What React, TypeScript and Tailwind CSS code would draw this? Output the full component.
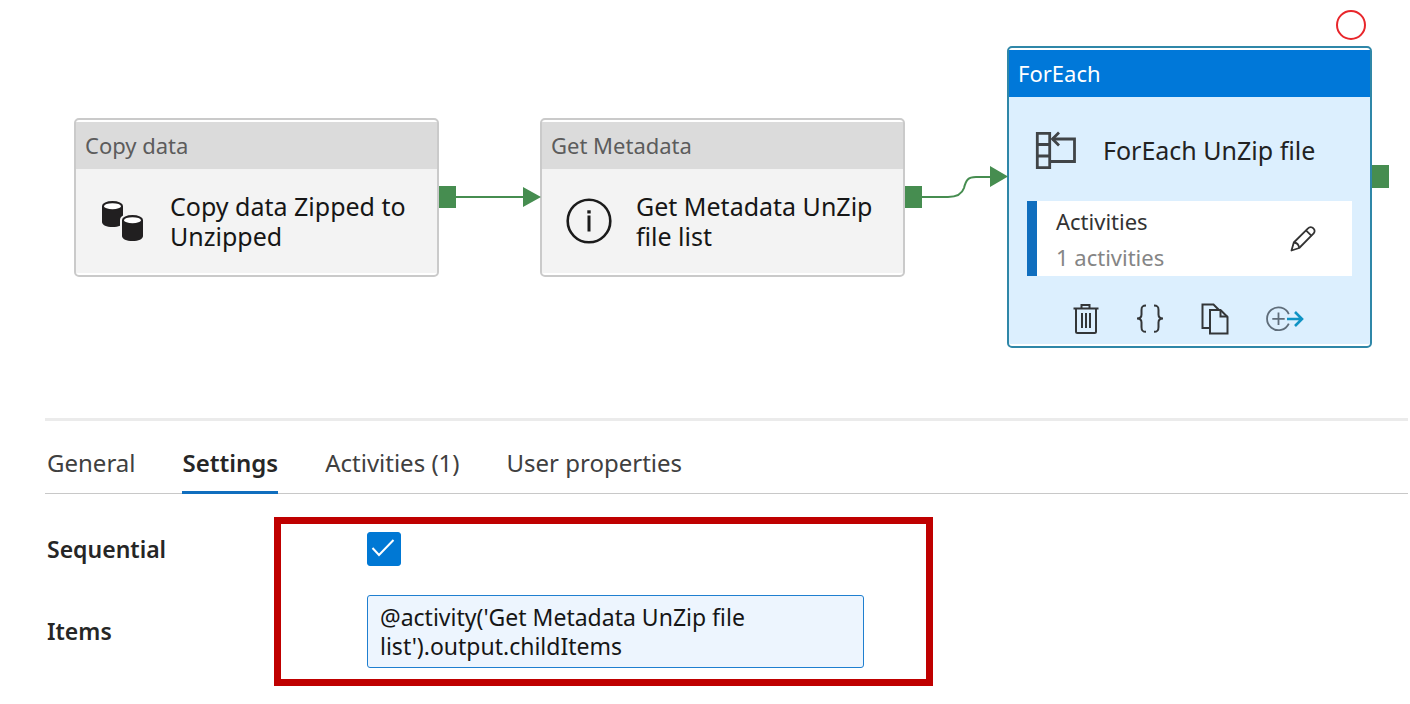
import { useState, type ReactNode } from "react";

type ActivityNodeProps = {
  type: string;
  name: string;
  icon: ReactNode;
  place: string;
};

function ActivityNode({ type, name, icon, place }: ActivityNodeProps) {
  return (
    <article
      className={`absolute w-[365px] rounded-[5px] border-2 border-[#cacaca] bg-white py-0.5 ${place}`}
    >
      <h2 className="flex h-[47px] items-center bg-[#dbdbdb] px-[9px] text-[22px] text-[#5c5c5c]">
        {type}
      </h2>
      <div className="flex h-[104px] items-center bg-[#f3f3f3] pl-6">
        <div className="flex w-[70px] shrink-0">{icon}</div>
        <p className="w-[250px] text-[25px] leading-[30px] text-[#161616]">{name}</p>
      </div>
    </article>
  );
}

function CopyDataIcon() {
  return (
    <svg width="44" height="42" viewBox="0 0 44 42" aria-hidden="true">
      <path d="M2 6v16c0 3 4.500 5 10.500 5s10.500-2 10.500-5V6z" fill="#211f20" />
      <ellipse cx="12.500" cy="6" rx="10.500" ry="5" fill="#211f20" />
      <ellipse cx="12.500" cy="6.200" rx="8.400" ry="3" fill="#fff" />
      <path d="M20 20v17h24V20c0-4-5-6.500-12-6.500S20 16 20 20z" fill="#f3f3f3" />
      <path d="M22 20v16c0 3 4.500 5 10.500 5s10.500-2 10.500-5V20z" fill="#211f20" />
      <ellipse cx="32.500" cy="20" rx="10.500" ry="5" fill="#211f20" />
      <ellipse cx="32.500" cy="20.200" rx="8.400" ry="3" fill="#fff" />
    </svg>
  );
}

function InfoIcon() {
  return (
    <svg width="46" height="46" viewBox="0 0 46 46" fill="none" aria-hidden="true">
      <circle cx="23" cy="23" r="21.300" stroke="#1b1b1b" strokeWidth="2.600" />
      <rect x="21.500" y="17.500" width="3" height="16" fill="#1b1b1b" />
      <rect x="21.300" y="12.300" width="3.400" height="3.200" fill="#1b1b1b" />
    </svg>
  );
}

function ForEachIcon() {
  return (
    <svg
      width="42"
      height="40"
      viewBox="0 0 42 40"
      fill="none"
      stroke="#404447"
      strokeWidth="2.800"
      aria-hidden="true"
    >
      <path d="M2.300 3.300h12.400v34.400H2.300zM2.300 14.500h12.400M2.300 26h12.400" />
      <path d="M17 9h22.500v22.500H15" />
      <path d="M24 2.500L17.500 9l6.500 6.500" />
    </svg>
  );
}

function PencilIcon() {
  return (
    <svg
      width="26"
      height="26"
      viewBox="0 0 26 26"
      fill="none"
      stroke="#333"
      strokeWidth="1.800"
      strokeLinejoin="round"
      aria-hidden="true"
    >
      <path d="M1.500 24.500l2.300-8L18 2.300a3.600 3.600 0 0 1 5.400 0 3.600 3.600 0 0 1 0 5.400L9.200 22z" />
      <path d="M3.800 16.500c3 .2 5 2.200 5.400 5.500M16 4.300l5.600 5.600" />
    </svg>
  );
}

function TrashIcon() {
  return (
    <svg
      width="26"
      height="32"
      viewBox="0 0 26 32"
      fill="none"
      stroke="#333638"
      strokeWidth="2"
      aria-hidden="true"
    >
      <path d="M0.500 5.500h25M8.500 5V2h8v3M3 6v22.500a1.500 1.500 0 0 0 1.500 1.500h17a1.500 1.500 0 0 0 1.500-1.500V6" />
      <path d="M9 10v15M13 10v15M17 10v15" />
    </svg>
  );
}

function BracesIcon() {
  return (
    <svg
      width="28"
      height="30"
      viewBox="0 0 28 30"
      fill="none"
      stroke="#333638"
      strokeWidth="2"
      aria-hidden="true"
    >
      <path d="M10 1.500C6 1.500 5.500 3 5.500 6v4.500c0 2.500-1.500 4-4.500 4 3 0 4.500 1.500 4.500 4V23c0 3 .5 4.800 4.500 4.800" />
      <path d="M18 1.500c4 0 4.500 1.500 4.500 4.500v4.500c0 2.500 1.500 4 4.500 4-3 0-4.500 1.500-4.500 4V23c0 3-.5 4.800-4.500 4.800" />
    </svg>
  );
}

function CopyIcon() {
  return (
    <svg
      width="28"
      height="32"
      viewBox="0 0 28 32"
      fill="none"
      stroke="#333638"
      strokeWidth="2"
      aria-hidden="true"
    >
      <path d="M9 25H1.500V1.500h11L18 7" />
      <path d="M9 7v23.500h17.500V14L19.500 7z" />
      <path d="M19.500 7v6.500h7" />
    </svg>
  );
}

function AddOutputIcon() {
  return (
    <svg width="38" height="26" viewBox="0 0 38 26" fill="none" aria-hidden="true">
      <path
        d="M22.800 8A11.400 11.400 0 1 0 22.800 17.500"
        stroke="#5f6d7a"
        strokeWidth="1.800"
      />
      <path d="M12.500 6.500v12.500M6.300 12.800h12.400" stroke="#5f6d7a" strokeWidth="1.800" />
      <path d="M21 13h14.500M29 6l7 7-7 7" stroke="#0f93c4" strokeWidth="2.600" />
    </svg>
  );
}

function ForEachNode() {
  return (
    <article className="absolute left-[1007px] top-[46px] w-[365px] rounded-[5px] border-2 border-[#2f87a8] bg-white py-0.5">
      <h2 className="flex h-[47px] items-center bg-[#0078d9] px-[9px] text-[22px] text-white">
        ForEach
      </h2>
      <div className="h-[247px] bg-[#dceffe] pt-8">
        <div className="flex items-center pl-[26px]">
          <div className="w-[68px]">
            <ForEachIcon />
          </div>
          <p className="text-[25px] leading-[42px] text-[#222]">ForEach UnZip file</p>
        </div>
        <section className="mx-[18px] mt-[30px] flex h-[75px] items-center border-l-10 border-[#106ebe] bg-white pl-[19px] pr-9">
          <div className="flex-1 text-[22px] leading-9">
            <h3 className="text-[#333]">Activities</h3>
            <p className="text-[#858585]">1 activities</p>
          </div>
          <button type="button" aria-label="Edit activities">
            <PencilIcon />
          </button>
        </section>
        <div className="mt-[27px] flex items-center gap-[37px] pl-16">
          <button type="button" aria-label="Delete">
            <TrashIcon />
          </button>
          <button type="button" aria-label="Code">
            <BracesIcon />
          </button>
          <button type="button" aria-label="Clone">
            <CopyIcon />
          </button>
          <button type="button" aria-label="Add output">
            <AddOutputIcon />
          </button>
        </div>
      </div>
    </article>
  );
}

function PipelineCanvas() {
  return (
    <section aria-label="Pipeline" className="relative h-[418px] overflow-hidden">
      <ActivityNode
        type="Copy data"
        name="Copy data Zipped to Unzipped"
        icon={<CopyDataIcon />}
        place="left-[74px] top-[118px]"
      />
      <ActivityNode
        type="Get Metadata"
        name="Get Metadata UnZip file list"
        icon={<InfoIcon />}
        place="left-[540px] top-[118px]"
      />
      <ForEachNode />
      <svg
        className="pointer-events-none absolute left-0 top-0"
        width="1410"
        height="418"
        viewBox="0 0 1410 418"
        fill="none"
        aria-hidden="true"
      >
        <g fill="#468d50">
          <path d="M439 186h17v22h-17zM905 186h17v22h-17zM1372 165h17v23h-17z" />
          <path d="M523 187l18 10-18 10zM990 166l18 10.500-18 10.500z" />
        </g>
        <path
          d="M456 197h68M922 197h26c8 0 14-3 16-9 2-8 4-11 12-11h15"
          stroke="#468d50"
          strokeWidth="2"
        />
        <circle cx="1351" cy="25" r="14" stroke="#e8262b" strokeWidth="2" />
      </svg>
    </section>
  );
}

const tabs = ["General", "Settings", "Activities (1)", "User properties"];

export default function App() {
  const [active, setActive] = useState("Settings");
  const [sequential, setSequential] = useState(true);
  const [items, setItems] = useState(
    "@activity('Get Metadata UnZip file list').output.childItems",
  );

  return (
    <main className="min-h-screen bg-white font-['Noto_Sans','Open_Sans',sans-serif] text-[#262626]">
      <PipelineCanvas />
      <section aria-label="Properties" className="ml-[45px] mr-0.5 border-t-3 border-[#ebebeb]">
        <div role="tablist" className="flex h-[73px] gap-[47px] border-b border-[#c8c8c8] pl-0.5">
          {tabs.map((tab) => (
            <button
              key={tab}
              type="button"
              role="tab"
              aria-selected={tab === active}
              onClick={() => setActive(tab)}
              className={`-mb-px pt-3.5 border-b-3 text-[24px] ${
                tab === active
                  ? "border-[#106ebe] font-semibold text-[#262626]"
                  : "border-transparent text-[#404040]"
              }`}
            >
              {tab}
            </button>
          ))}
        </div>
        <form className="relative px-0.5 pt-[38px] text-[23px]">
          <div className="flex items-center">
            <label htmlFor="sequential" className="w-80 font-semibold">
              Sequential
            </label>
            <div className="grid">
              <input
                id="sequential"
                type="checkbox"
                checked={sequential}
                onChange={(event) => setSequential(event.target.checked)}
                className="peer col-start-1 row-start-1 size-[34px] appearance-none rounded-[3px] border border-[#0078d4] checked:bg-[#0078d4]"
              />
              <svg
                className="pointer-events-none invisible col-start-1 row-start-1 peer-checked:visible"
                width="34"
                height="34"
                viewBox="0 0 34 34"
                fill="none"
                aria-hidden="true"
              >
                <path d="M5.500 16l6.500 7L26.500 8" stroke="#fff" strokeWidth="2" />
              </svg>
            </div>
          </div>
          <div className="mt-7 flex items-center">
            <label htmlFor="items" className="w-80 font-semibold">
              Items
            </label>
            <textarea
              id="items"
              rows={2}
              value={items}
              onChange={(event) => setItems(event.target.value)}
              className="h-[73px] w-[497px] resize-none overflow-hidden rounded-[3px] border border-[#1f7fd0] bg-[#edf5fe] px-3 pt-[7px] leading-[29px] text-[#161616]"
            />
          </div>
          <div
            aria-hidden="true"
            className="pointer-events-none absolute left-[229px] top-[23px] h-[169px] w-[659px] border-7 border-[#bf0000]"
          />
        </form>
      </section>
    </main>
  );
}
